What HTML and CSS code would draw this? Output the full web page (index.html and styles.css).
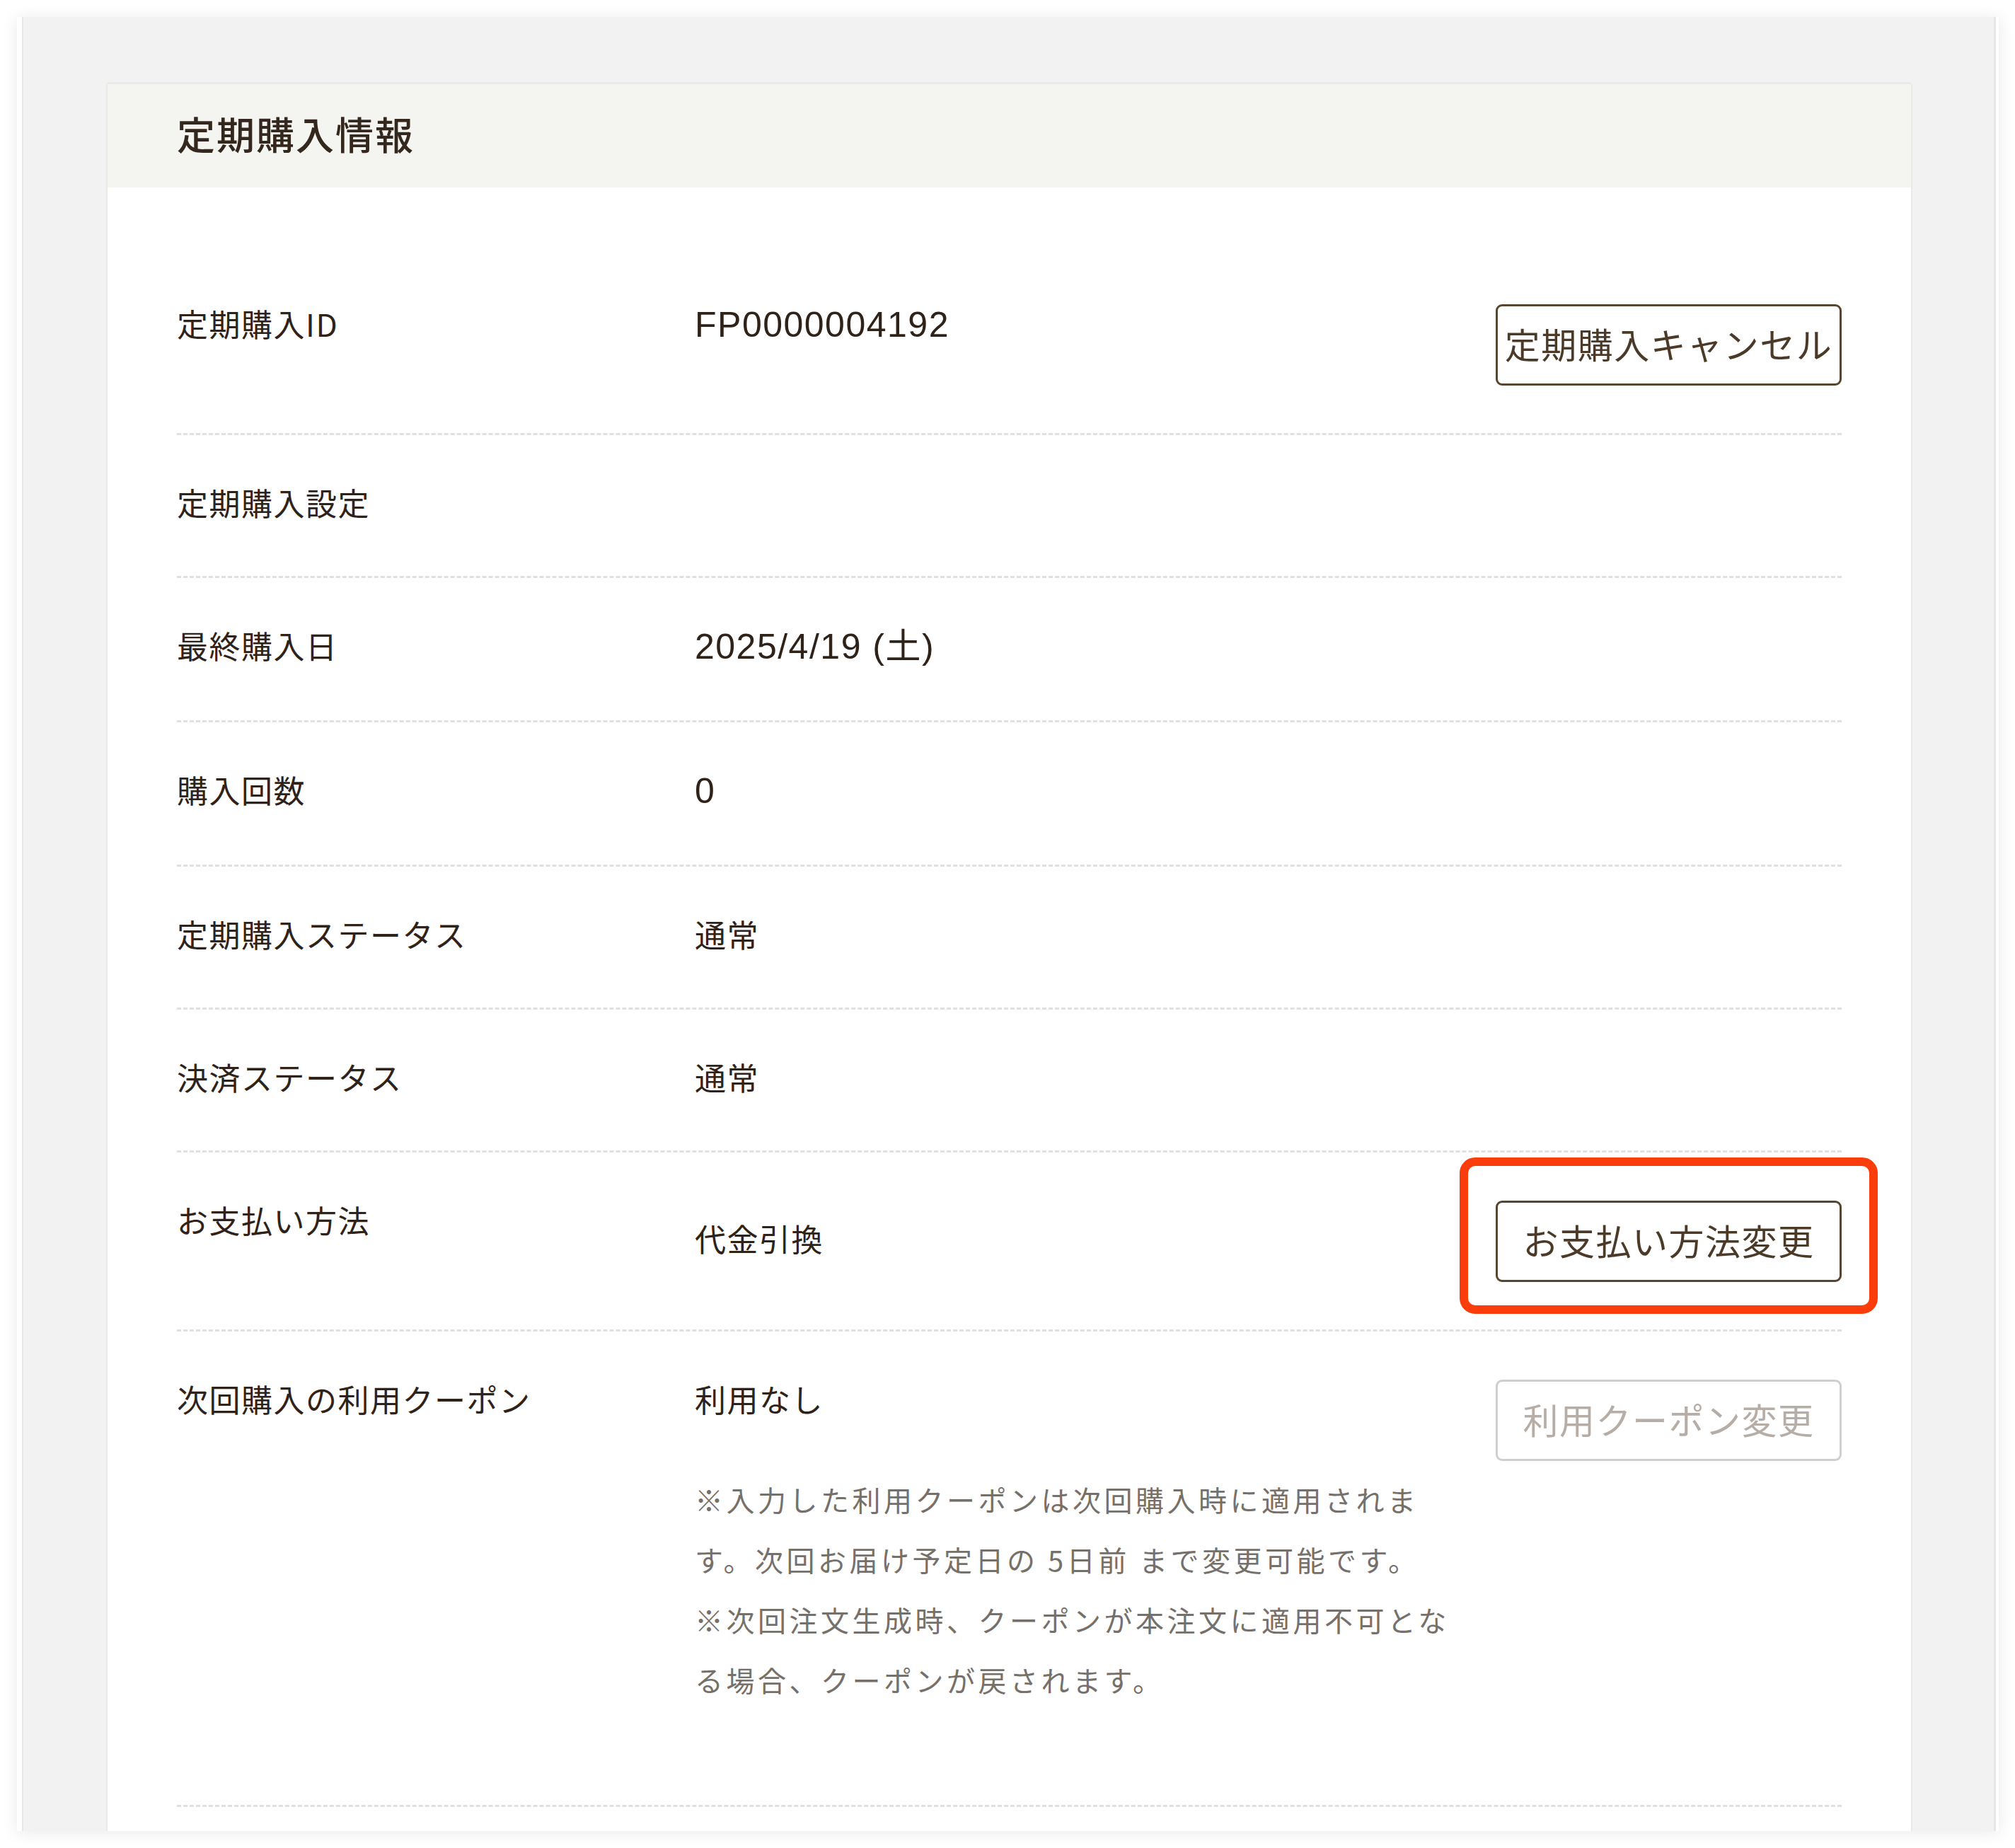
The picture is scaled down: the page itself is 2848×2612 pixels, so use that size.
FILE: index.html
```html
<!doctype html>
<html lang="ja">
<head>
  <meta charset="UTF-8">
  <title>定期購入情報</title>
  <link rel="stylesheet" href="styles.css">
</head>
<body>
  <div class="frame">
    <div class="card">
      <div class="card-head">
        <h2 class="card-title">定期購入情報</h2>
      </div>
      <div class="card-body">
        <div class="row">
          <div class="label">定期購入ID</div>
          <div class="value"><span class="num">FP0000004192</span></div>
          <div class="action"><button class="btn">定期購入キャンセル</button></div>
        </div>
        <div class="row">
          <div class="label">定期購入設定</div>
          <div class="value"></div>
        </div>
        <div class="row">
          <div class="label">最終購入日</div>
          <div class="value"><span class="num">2025/4/19 (土)</span></div>
        </div>
        <div class="row">
          <div class="label">購入回数</div>
          <div class="value"><span class="num">0</span></div>
        </div>
        <div class="row">
          <div class="label">定期購入ステータス</div>
          <div class="value">通常</div>
        </div>
        <div class="row">
          <div class="label">決済ステータス</div>
          <div class="value">通常</div>
        </div>
        <div class="row">
          <div class="label">お支払い方法</div>
          <div class="value value-mid">代金引換</div>
          <div class="action">
            <button class="btn">お支払い方法変更</button>
            <span class="mark"></span>
          </div>
        </div>
        <div class="row">
          <div class="label">次回購入の利用クーポン</div>
          <div class="value">
            利用なし
            <div class="notes">
              <p>※入力した利用クーポンは次回購入時に適用されます。次回お届け予定日の 5日前 まで変更可能です。</p>
              <p>※次回注文生成時、クーポンが本注文に適用不可となる場合、クーポンが戻されます。</p>
            </div>
          </div>
          <div class="action"><button class="btn btn-off" disabled>利用クーポン変更</button></div>
        </div>
      </div>
    </div>
  </div>
</body>
</html>
```

FILE: styles.css
```css
*{margin:0;
  padding:0;
  box-sizing:border-box;}
body{background:#fff;
     padding:24px 23px 24px 24px;
     font-family:"Noto Sans CJK JP","Noto Sans",sans-serif;
     color:#2e2219;}
.frame{height:2564px;
       overflow:hidden;
       background:#f2f2f2;
       border-left:7px solid #fff;
       border-right:4px solid #fff;
       box-shadow:0 2px 22px rgba(0,0,0,.09),
                  inset 2px 0 #e7e7e7,
                  inset -3px 0 #e7e7e7;
       padding:92px 118px 0 119px;}
.card{background:#fff;
      border:2px solid #e9e9e9;
      border-top-width:3px;
      border-radius:5px 5px 0 0;}
.card-head{height:146px;
           background:#f4f4f0;
           display:flex;
           align-items:center;
           padding:0 98px 7px;}
.card-title{font-size:54px;
            font-weight:500;
            letter-spacing:2px;
            color:#34271d;}
.card-body{padding:97px 98px 80px;}
.row{display:flex;
     align-items:flex-start;
     padding:68px 0 67px;
     border-bottom:3px dashed #e0e0e0;}
.label{width:732px;
       flex:none;
       font-size:44px;
       line-height:55px;
       padding-bottom:9px;
       letter-spacing:1.5px;}
.value{flex:1;
       padding:0 40px 9px 0;
       font-size:44px;
       line-height:55px;
       letter-spacing:1.5px;}
.value-mid{align-self:center;}
.num{font-family:"Liberation Sans","Noto Sans CJK JP",sans-serif;
     font-size:50px;
     line-height:55px;}
.notes{margin:72px 0 58px;
       font-size:40px;
       line-height:85px;
       letter-spacing:4.5px;
       color:#76706b;}
.action{width:489px;
        flex:none;
        position:relative;}
.btn{display:block;
     width:100%;
     height:115px;
     padding-bottom:6px;
     background:#fff;
     border:3px solid #564530;
     border-radius:9px;
     font-family:"Noto Sans CJK JP",sans-serif;
     font-size:50px;
     letter-spacing:1.5px;
     color:#4b3a27;
     cursor:pointer;}
.btn-off{border-color:#cfcfcf;
         color:#b5ada6;
         cursor:default;}
.mark{position:absolute;
      top:-61px;
      bottom:-45px;
      left:-51px;
      right:-51px;
      border:12px solid #fa3d0b;
      border-radius:22px;}
```
